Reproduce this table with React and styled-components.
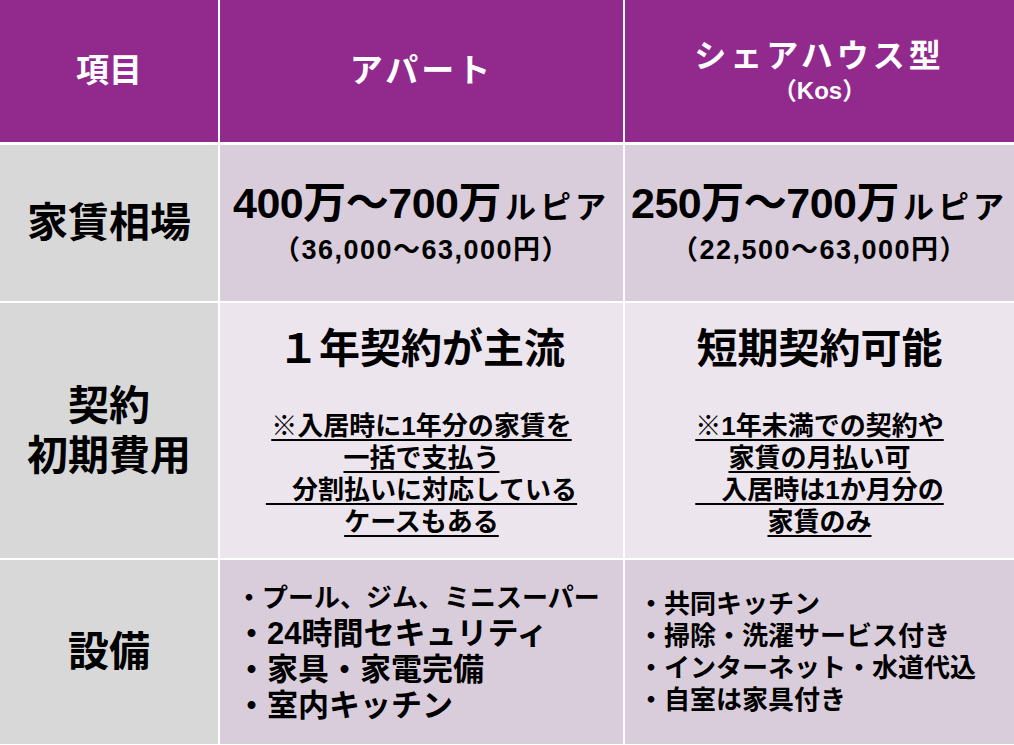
import React from 'react';
import styled, { createGlobalStyle } from 'styled-components';

const GlobalStyle = createGlobalStyle`
  html, body {
    margin: 0;
    padding: 0;
    background: #ffffff;
  }
  body {
    font-family: "Liberation Sans", "Noto Sans CJK JP", sans-serif;
  }
`;

/* 表全体：白い罫線は gap で表現 */
const Table = styled.div`
  display: grid;
  grid-template-columns: 218px 403px 389px;
  grid-template-rows: 143px 156px 255px 184px;
  column-gap: 2px;
  row-gap: 2px;
  width: 1014px;
  height: 745px;
  background: #ffffff;
  font-weight: 700;
  & > :nth-child(-n + 3) {
    margin-bottom: 1px;
  }
`;

const Cell = styled.div`
  display: flex;
  flex-direction: column;
  align-items: ${(p) => (p.$left ? 'flex-start' : 'center')};
  justify-content: ${(p) => (p.$top ? 'flex-start' : 'center')};
  background: ${(p) => p.$bg};
  color: ${(p) => (p.$head ? '#ffffff' : '#000000')};
  text-align: center;
  box-sizing: border-box;
  padding: ${(p) => p.$pad || '0'};
`;

const HeadText = styled.div`
  font-size: ${(p) => p.$size || 32}px;
  letter-spacing: ${(p) => p.$spacing || 0}px;
  line-height: ${(p) => p.$lh || 40}px;
  white-space: nowrap;
`;

const Label = styled.div`
  font-size: 41px;
  line-height: 50px;
  white-space: nowrap;
`;

const Price = styled.div`
  font-size: 43px;
  line-height: 48px;
  white-space: nowrap;
  letter-spacing: -0.5px;
`;

const Unit = styled.span`
  font-size: 31px;
  letter-spacing: 4px;
  margin-left: 4px;
`;

const Yen = styled.div`
  font-size: 27px;
  line-height: 36px;
  letter-spacing: 1.5px;
  white-space: nowrap;
`;

const Title = styled.div`
  font-size: 41px;
  line-height: 50px;
  white-space: nowrap;
`;

const Notes = styled.div`
  margin-top: 36px;
  font-size: 26px;
  line-height: 32px;
`;

const NoteLine = styled.div`
  white-space: pre;
`;

const Under = styled.span`
  text-decoration: underline;
  text-decoration-thickness: 2px;
  text-underline-offset: 4px;
`;

const List = styled.ul`
  list-style: none;
  margin: 0;
  padding: 0;
  text-align: left;
`;

const Item = styled.li`
  font-size: ${(p) => p.$size}px;
  line-height: ${(p) => p.$lh}px;
  white-space: nowrap;
`;

const PURPLE = '#922a8e';
const GRAY = '#d8d8d8';
const MAUVE = '#dacddb';
const PALE = '#ede5ee';

const aptNotes = [
  '※入居時に1年分の家賃を',
  '一括で支払う',
  '　分割払いに対応している',
  'ケースもある',
];

const shareNotes = [
  '※1年未満での契約や',
  '家賃の月払い可',
  '　入居時は1か月分の',
  '家賃のみ',
];

const aptItems = [
  { text: '・プール、ジム、ミニスーパー', size: 26 },
  { text: '・24時間セキュリティ', size: 31 },
  { text: '・家具・家電完備', size: 31 },
  { text: '・室内キッチン', size: 31 },
];

const shareItems = [
  '・共同キッチン',
  '・掃除・洗濯サービス付き',
  '・インターネット・水道代込',
  '・自室は家具付き',
];

const NoteBlock = ({ lines }) => (
  <Notes>
    {lines.map((l) => (
      <NoteLine key={l}>
        <Under>{l}</Under>
      </NoteLine>
    ))}
  </Notes>
);

export default function App() {
  return (
    <>
      <GlobalStyle />
      <Table>
        <Cell $bg={PURPLE} $head>
          <HeadText $size={33}>項目</HeadText>
        </Cell>
        <Cell $bg={PURPLE} $head>
          <HeadText $size={33} $spacing={3}>アパート</HeadText>
        </Cell>
        <Cell $bg={PURPLE} $head>
          <HeadText $size={32} $spacing={4} $lh={40}>シェアハウス型</HeadText>
          <HeadText $size={24} $lh={30}>（Kos）</HeadText>
        </Cell>

        <Cell $bg={GRAY}>
          <Label>家賃相場</Label>
        </Cell>
        <Cell $bg={MAUVE}>
          <Price>400万～700万<Unit>ルピア</Unit></Price>
          <Yen>（36,000～63,000円）</Yen>
        </Cell>
        <Cell $bg={MAUVE}>
          <Price>250万～700万<Unit>ルピア</Unit></Price>
          <Yen>（22,500～63,000円）</Yen>
        </Cell>

        <Cell $bg={GRAY}>
          <Label>契約</Label>
          <Label>初期費用</Label>
        </Cell>
        <Cell $bg={PALE} $top $pad="21px 0 0">
          <Title>１年契約が主流</Title>
          <NoteBlock lines={aptNotes} />
        </Cell>
        <Cell $bg={PALE} $top $pad="21px 0 0">
          <Title>短期契約可能</Title>
          <NoteBlock lines={shareNotes} />
        </Cell>

        <Cell $bg={GRAY}>
          <Label>設備</Label>
        </Cell>
        <Cell $bg={MAUVE} $left $pad="0 0 0 16px">
          <List>
            {aptItems.map((it) => (
              <Item key={it.text} $size={it.size} $lh={36}>{it.text}</Item>
            ))}
          </List>
        </Cell>
        <Cell $bg={MAUVE} $left $pad="0 0 0 13px">
          <List>
            {shareItems.map((t) => (
              <Item key={t} $size={26} $lh={32}>{t}</Item>
            ))}
          </List>
        </Cell>
      </Table>
    </>
  );
}
